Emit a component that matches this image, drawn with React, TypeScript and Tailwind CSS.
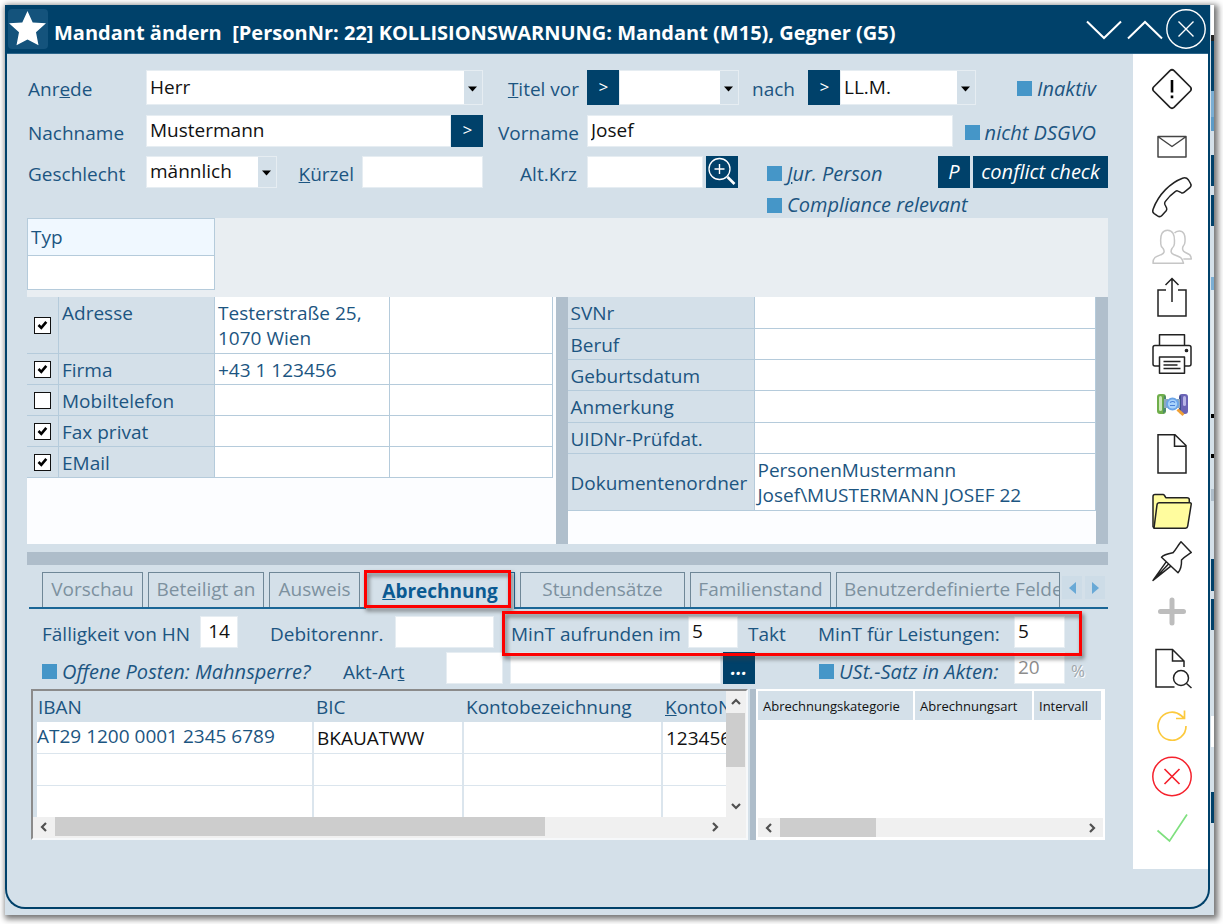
import React from 'react';

const labelBase = 'leading-6 text-[#1c5581] whitespace-nowrap';
const labelText = `text-[19px] ${labelBase}`;
const fieldBase = 'min-w-0 bg-white border border-[#e6edf2] px-[3px] pb-[2px] text-[19px] leading-6 outline-none rounded-none';
const field = `${fieldBase} text-[#111]`;
const darkButton = 'flex shrink-0 items-center justify-center bg-[#00416a] text-white';
const pickButton = `${darkButton} w-8 self-stretch pb-[2px] text-[17px] italic`;

function Label({ htmlFor, className = '', children }: { htmlFor: string; className?: string; children: React.ReactNode }) {
  return (
    <label htmlFor={htmlFor} className={`${labelText} shrink-0 pt-[3px] ${className}`}>
      {children}
    </label>
  );
}

function Combo({ id, value, className = '' }: { id: string; value: string; className?: string }) {
  return (
    <div className={`relative flex min-w-0 ${className}`}>
      <select id={id} defaultValue={value} className={`${field} h-full w-full appearance-none pr-5`}>
        <option value={value}>{value}</option>
      </select>
      <span className="pointer-events-none absolute top-px right-px bottom-px flex w-[18px] items-center justify-center bg-[#d4e0e9] pt-[2px] pr-[2px]">
        <svg width="9" height="6" viewBox="0 0 9 6"><path d="M0 0.5h9L4.5 5.5z" fill="#000" /></svg>
      </span>
    </div>
  );
}

function Tick({ id, className = '', children }: { id: string; className?: string; children: React.ReactNode }) {
  return (
    <label htmlFor={id} className={`flex shrink-0 items-center gap-[5px] text-[20px] italic ${labelBase} ${className}`}>
      <input id={id} type="checkbox" className="size-[15px] shrink-0 appearance-none bg-[#4596c8] checked:bg-[#00416a]" />
      <span>{children}</span>
    </label>
  );
}

function BoxTick({ on, name }: { on: boolean; name: string }) {
  return (
    <span className="ml-[7px] grid size-[17px]">
      <input type="checkbox" aria-label={name} defaultChecked={on} className="peer col-start-1 row-start-1 size-[17px] appearance-none border border-[#111] bg-white" />
      <svg viewBox="0 0 17 17" className="pointer-events-none col-start-1 row-start-1 size-[17px] opacity-0 peer-checked:opacity-100" fill="none" stroke="#000" strokeWidth="2.6">
        <path d="M4.5 8l2.8 2.8 5-6" />
      </svg>
    </span>
  );
}

const contacts = [
  { name: 'Adresse', value: 'Testerstraße 25, 1070 Wien', on: true },
  { name: 'Firma', value: '+43 1 123456', on: true },
  { name: 'Mobiltelefon', value: '', on: false },
  { name: 'Fax privat', value: '', on: true },
  { name: 'EMail', value: '', on: true },
];

const details = [
  ['SVNr', ''],
  ['Beruf', ''],
  ['Geburtsdatum', ''],
  ['Anmerkung', ''],
  ['UIDNr-Prüfdat.', ''],
  ['Dokumentenordner', 'PersonenMustermann Josef\\MUSTERMANN JOSEF 22'],
];

const backdrop: [number, string][] = [
  [30, '#ffffff'], [6, '#222222'], [50, '#00416a'], [27, '#7aaed4'], [14, '#5b9bc8'], [24, '#d4e0e9'],
  [31, '#00416a'], [9, '#d4e0e9'], [31, '#00416a'], [51, '#d4e0e9'], [14, '#7aaed4'], [124, '#dfe8ee'],
  [4, '#000000'], [36, '#d4e0e9'], [4, '#000000'], [32, '#d4e0e9'], [12, '#aebdca'], [58, '#d4e0e9'], [32, '#00416a'],
  [8, '#d4e0e9'], [31, '#00416a'], [87, '#d4e0e9'], [31, '#ffffff'], [45, '#d4e0e9'], [31, '#00416a'], [93, '#d4e0e9'],
];

function ToolButton({ name, children }: { name: string; children: React.ReactNode }) {
  return (
    <button type="button" aria-label={name} className="block size-10">
      <svg viewBox="0 0 40 40" className="size-10 overflow-visible" fill="none" stroke="#222" strokeWidth="1.5" strokeLinejoin="round">
        {children}
      </svg>
    </button>
  );
}

function Toolbar() {
  return (
    <aside className="flex w-[75px] shrink-0 flex-col items-center gap-[18px] self-start bg-white pt-[15px] pb-5 pl-[2px]">
      <ToolButton name="Warnung">
        <path d="M18 1.6q2-1.7 4 0L38.4 18q1.7 2 0 4L22 38.4q-2 1.7-4 0L1.6 22q-1.7-2 0-4z" strokeWidth="1.7" />
        <path d="M20 11v12.5M20 26.500v2.800" strokeWidth="2.6" stroke="#000" />
      </ToolButton>
      <div className="flex flex-col gap-[10px]">
        <ToolButton name="E-Mail">
          <path d="M6 9.500h28v20.500H6zM6.500 10L20 19.500 33.500 10" stroke="#444" />
        </ToolButton>
        <ToolButton name="Telefon">
          <path d="M30.500 1.200C19 5.500 6.500 17 1 32.500c-.6 1.800-.2 3.200 1.200 4.200l3.300 2.200c1.600 1 3.200.9 4.400-.5l4.300-4.700c.7-1 .8-1.700.4-2.700l-1.800-3.800c-.4-1-.2-1.700.4-2.600 3-4.200 6.300-7.500 10.300-10.300.9-.6 1.700-.7 2.600-.2l3.200 1.600c1 .4 1.800.3 2.700-.4l5.800-4.600c1.500-1.300 1.700-2.500.8-4L36.500 3C35 1 33 .4 30.500 1.200z" />
        </ToolButton>
        <ToolButton name="Personen">
          <g stroke="#c6c6c6">
            <path d="M1 36.200c0-6 3-6.700 8.500-8.700 3-1.200 3.200-3.500 1.600-6-1.700-1.500-2.600-3.800-2.300-5.700C8 7.500 10.500 3.300 15.500 3.300s7.500 4.200 6.900 12.500c.2 2-.8 4.200-2.400 5.700-1.500 2.500-1.200 4.800 1.700 6 5.500 2 8.800 2.700 9.800 8.700z" />
            <path d="M22.500 6.200c1-1.500 2.800-2.200 4.700-2.200 4.300 0 6.300 3.400 5.800 10 .1 2-.6 3.800-1.800 5.200-1.200 2.300-.6 5 1.800 6.100 4 1.800 6 2.300 6.300 6.700h-8" />
          </g>
        </ToolButton>
        <ToolButton name="Teilen">
          <path d="M14 13H6v26h28V13h-8M20 25V1.500M13.500 8L20 1.500 26.500 8" strokeLinejoin="miter" />
        </ToolButton>
      </div>
      <div className="flex flex-col gap-[10px]">
        <ToolButton name="Drucken">
          <path d="M7.500 10.500V-0.300h25v10.800M7.500 31H3q-2 0-2-2V12.500q0-2 2-2h34q2 0 2 2V29q0 2-2 2h-4.500M7.500 22h25v16.200h-25zM11.500 26.500h17M11.500 30h14M11.500 33.500h17" />
          <circle cx="34.500" cy="15.500" r="1.100" fill="#222" />
        </ToolButton>
        <ToolButton name="Suchen">
          <g stroke="none">
            <rect x="5" y="9" width="9" height="20" rx="3" fill="#6fae4b" />
            <rect x="7" y="11" width="3" height="15" rx="1.500" fill="#cfe9bb" />
            <path d="M12 10l2 2v14l-3 3z" fill="#4c8a6a" />
            <rect x="27" y="9" width="9" height="20" rx="3" fill="#6a63b5" />
            <rect x="31" y="11" width="3" height="10" rx="1.500" fill="#b9b5e6" />
            <path d="M27 12l2-2v18l-2-3z" fill="#40508c" />
            <path d="M12 14h4v9h-4zM25 14h3v9h-3z" fill="#8fa7bd" />
            <circle cx="20.500" cy="19" r="6.500" fill="#6ba4e6" />
            <circle cx="20.500" cy="19" r="4.600" fill="#a9d3fa" />
            <path d="M18 17.500q3-2 5 0M18 20.500h5" stroke="#4a80d8" strokeWidth="1.200" />
          </g>
          <path d="M25.500 24.500l6 5.500" stroke="#f2a134" strokeWidth="3" />
        </ToolButton>
        <ToolButton name="Neues Dokument">
          <path d="M6-0.300h17L34 10.500V38H6zM22.500-0.300v11.500H34" strokeLinejoin="miter" />
        </ToolButton>
      </div>
      <div className="flex flex-col gap-[10px]">
        <ToolButton name="Ordner">
          <path d="M2 35.200L1 33.500V3.500q0-2 2-2h8q1 0 1.500 1l1.300 2.200H35q2.300 0 2.300 2v3.500" fill="#fffc9e" />
          <path d="M2 35.200L5 11.800q.3-2 2.300-2H38q1.500 0 1.200 1.600l-3.500 21.800q-.3 2-2.200 2z" fill="#fffc9e" />
        </ToolButton>
        <ToolButton name="Anheften">
          <path d="M29 -1.200L39.300 9.400C37 11.400 33.500 12.600 29.500 17.100c.2 5-.8 9.500-3.500 12.700L9.500 14.300c2.300-2.700 6.500-3.500 11.500-4.500 3-3.500 5-7.500 8-11zM14.500 18.400L1 37.400 18.500 23.400M1.500 37.100L17 20.600" />
        </ToolButton>
        <ToolButton name="Hinzufügen">
          <path d="M20 7v23M8.500 18.500h23" stroke="#bdbdbd" strokeWidth="5" strokeLinecap="round" />
        </ToolButton>
      </div>
      <ToolButton name="Vorschau öffnen">
        <path d="M22.500 36H4V-1.500h16.500L32 10v6M20.500-1.500V10H32" strokeLinejoin="miter" />
        <circle cx="29" cy="27" r="7.500" />
        <path d="M34.500 32.500l5 4.500" />
      </ToolButton>
      <div className="flex flex-col gap-[10px]">
        <ToolButton name="Aktualisieren">
          <path d="M34 17a14 14 0 1 1-5-10.500l3.500 3M32.500 1.500v8H24" stroke="#fcc93c" strokeWidth="1.700" strokeLinejoin="miter" />
        </ToolButton>
        <ToolButton name="Abbrechen">
          <circle cx="20" cy="17.500" r="19.200" stroke="#f5222d" />
          <path d="M12.500 10l15 15M27.500 10l-15 15" stroke="#f5222d" strokeWidth="1.700" />
        </ToolButton>
        <ToolButton name="Speichern">
          <path d="M5.500 21.500L17.500 32 35 5.500" stroke="#7fe07f" strokeWidth="1.700" strokeLinejoin="miter" />
        </ToolButton>
      </div>
    </aside>
  );
}

function MasterData() {
  return (
    <form className="flex flex-col">
      <div className="flex h-[35px] items-stretch">
        <div className="flex flex-1 items-center">
          <Label htmlFor="anrede" className="w-[119px] pl-px">Anr<u>e</u>de</Label>
          <Combo id="anrede" value="Herr" className="flex-1 self-stretch" />
        </div>
        <div className="flex w-[625px] items-center">
          <Label htmlFor="titelvor" className="w-[104px] pr-2 text-right"><u>T</u>itel vor</Label>
          <button type="button" aria-label="Titel vor wählen" className={pickButton}>&gt;</button>
          <Combo id="titelvor" value="" className="w-[120px] self-stretch" />
          <Label htmlFor="titelnach" className="w-[69px] text-center">nach</Label>
          <button type="button" aria-label="Titel nach wählen" className={pickButton}>&gt;</button>
          <Combo id="titelnach" value="LL.M." className="w-[136px] self-stretch" />
          <Tick id="inaktiv" className="ml-auto pt-[2px] pr-3">Inaktiv</Tick>
        </div>
      </div>
      <div className="mt-[10px] flex h-8 items-stretch">
        <div className="flex flex-1 items-center">
          <Label htmlFor="nachname" className="w-[119px] pl-px">Nachname</Label>
          <input id="nachname" defaultValue="Mustermann" className={`${field} flex-1 self-stretch`} />
          <button type="button" aria-label="Nachname wählen" className={pickButton}>&gt;</button>
        </div>
        <div className="flex w-[625px] items-center">
          <Label htmlFor="vorname" className="w-[104px] pr-2 text-right">Vorname</Label>
          <input id="vorname" defaultValue="Josef" className={`${field} w-[366px] self-stretch`} />
          <Tick id="dsgvo" className="ml-auto pt-[3px] pr-3">nicht DSGVO</Tick>
        </div>
      </div>
      <div className="mt-[9px] flex h-8 items-stretch">
        <div className="flex flex-1 items-center">
          <Label htmlFor="geschlecht" className="w-[119px] pl-px">Geschlecht</Label>
          <Combo id="geschlecht" value="männlich" className="w-[131px] self-stretch" />
          <Label htmlFor="kuerzel" className="ml-auto pr-2"><u>K</u>ürzel</Label>
          <input id="kuerzel" className={`${field} w-[121px] self-stretch`} />
        </div>
        <div className="flex w-[625px] items-center">
          <Label htmlFor="altkrz" className="w-[104px] pr-[10px] text-right">Alt.Krz</Label>
          <input id="altkrz" className={`${field} w-[116px] self-stretch`} />
          <button type="button" aria-label="Kürzel suchen" className={`${darkButton} ml-[3px] w-8 self-stretch`}>
            <svg width="32" height="32" viewBox="0 0 32 32" fill="none" stroke="#fff">
              <circle cx="13.500" cy="13" r="10.500" strokeWidth="1.300" />
              <path d="M13.500 8v10M8.500 13h10" strokeWidth="1.400" />
              <path d="M21.500 21L28.500 28" strokeWidth="2.600" />
            </svg>
          </button>
          <Tick id="jur" className="ml-[29px] pt-[3px]"><u>J</u>ur. Person</Tick>
          <button type="button" className={`${darkButton} ml-auto w-8 self-stretch text-[20px] leading-6 italic`}>P</button>
          <button type="button" className={`${darkButton} ml-[3px] w-[135px] self-stretch text-[20px] leading-6 whitespace-nowrap italic`}>conflict check</button>
        </div>
      </div>
      <div className="mt-[5px] flex h-[25px] justify-end">
        <div className="w-[625px] pl-[284px]">
          <Tick id="compliance">Compliance relevant</Tick>
        </div>
      </div>
    </form>
  );
}

function Overview() {
  const cell = 'border-r border-b border-[#b5cbdb] p-0';
  return (
    <>
      <div className="h-[79px] bg-[#e9eef2]">
        <table className="w-[188px] border-collapse text-left">
          <thead>
            <tr><th scope="col" className={`${labelText} h-[37px] border border-[#b5cbdb] bg-[#f0f8ff] px-[3px] font-normal`}>Typ</th></tr>
          </thead>
          <tbody>
            <tr><td className="h-[34px] border border-[#b5cbdb] bg-white" /></tr>
          </tbody>
        </table>
      </div>
      <div className="grid h-[247px] grid-cols-[minmax(0,1fr)_12px_minmax(0,1fr)_12px] bg-[#fcfdff]">
        <div className="pr-[3px]">
          <table className="w-full table-fixed border-separate border-spacing-0">
            <colgroup>
              <col className="w-[32px]" /><col className="w-[156px]" /><col className="w-[175px]" /><col />
            </colgroup>
            <tbody>
              {contacts.map((c, i) => (
                <tr key={c.name} className={i === 0 ? 'h-[57px]' : 'h-[31px]'}>
                  <td className={`${cell} bg-[#d4e0e9]`}><BoxTick on={c.on} name={c.name} /></td>
                  <th scope="row" className={`${cell} ${labelText} bg-[#d4e0e9] px-[3px] pt-1 text-left align-top font-normal`}>{c.name}</th>
                  <td className={`${cell} bg-white px-[3px] pt-1 align-top text-[19px] leading-[25px] text-[#1c5581]`}>{c.value}</td>
                  <td className={`${cell} bg-white`} />
                </tr>
              ))}
            </tbody>
          </table>
        </div>
        <div className="bg-[#b0bfcc]" />
        <div>
          <table className="w-full table-fixed border-separate border-spacing-0">
            <colgroup><col className="w-[187px]" /><col /></colgroup>
            <tbody>
              {details.map(([name, value], i) => (
                <tr key={name} className={value ? 'h-[57px]' : i % 3 === 0 ? 'h-8' : 'h-[31px]'}>
                  <th scope="row" className={`${cell} ${labelText} bg-[#d4e0e9] px-[3px] pt-px text-left font-normal`}>{name}</th>
                  <td className={`${cell} bg-white px-[3px] pt-[2px] text-[19px] leading-[25px] text-[#1c5581]`}>
                    <span className="block max-w-[300px]">{value}</span>
                  </td>
                </tr>
              ))}
            </tbody>
          </table>
        </div>
        <div className="bg-[#b0bfcc]" />
      </div>
      <div className="mt-2 h-[13px] bg-[#aebdca]" />
    </>
  );
}

const tab = 'h-[35px] shrink-0 border border-b-0 border-[#6f8797] pb-[2px] text-[19px] leading-6 text-[#7d919f] whitespace-nowrap';
const redFrame = 'pointer-events-none absolute border-[3px] border-[#fd0000] drop-shadow-[2px_3px_2px_rgba(60,60,60,0.7)]';

function Tabs() {
  return (
    <div role="tablist" className="mt-[7px] ml-[2px] flex items-start">
      <div className="flex min-w-0 flex-1 items-start">
        <div className="flex gap-[5px] border-b-2 border-[#1a6696] pr-[5px] pl-[13px]">
          <button type="button" role="tab" className={`${tab} w-[101px]`}>Vorschau</button>
          <button type="button" role="tab" className={`${tab} w-[116px]`}>Beteiligt an</button>
          <button type="button" role="tab" className={`${tab} w-[91px]`}>Ausweis</button>
        </div>
        <div className="relative">
          <button type="button" role="tab" aria-selected="true" className="h-[37px] w-[150px] border border-b-0 border-[#1a6696] pb-px text-[19px] leading-6 font-bold text-[#0b5a92]">
            <u>A</u>brechnung
          </button>
          <span className={`${redFrame} -top-[2px] -left-px h-[38px] w-[147px]`} />
        </div>
        <div className="flex min-w-0 flex-1 gap-[5px] overflow-hidden border-b-2 border-[#1a6696] pl-[5px]">
          <button type="button" role="tab" className={`${tab} w-[165px]`}>St<u>u</u>ndensätze</button>
          <button type="button" role="tab" className={`${tab} w-[141px]`}>Familienstand</button>
          <div className="min-w-0 flex-1 overflow-hidden border-r border-[#6f8797]">
            <button type="button" role="tab" className={`${tab} w-[240px] pl-[7px] text-left`}>Benutzerdefinierte Felder</button>
          </div>
        </div>
      </div>
      <div className="flex h-[37px] gap-[3px] border-b-2 border-[#1a6696] pt-1 pr-[3px] pl-[2px]">
        <button type="button" aria-label="Zurück" className="flex h-[23px] w-5 items-center justify-center bg-[#cddce7]">
          <svg width="7" height="12" viewBox="0 0 7 12"><path d="M7 0v12L0 6z" fill="#69a9d6" /></svg>
        </button>
        <button type="button" aria-label="Weiter" className="flex h-[23px] w-5 items-center justify-center bg-[#cddce7]">
          <svg width="7" height="12" viewBox="0 0 7 12"><path d="M0 0v12l7-6z" fill="#69a9d6" /></svg>
        </button>
      </div>
    </div>
  );
}

function BillingForm() {
  return (
    <form className="flex flex-col gap-1 pt-[7px] pl-[15px]">
      <div className="flex h-8 items-center">
        <Label htmlFor="faellig" className="w-[158px]">Fälligkeit von HN</Label>
        <input id="faellig" defaultValue="14" className={`${field} w-[38px] self-stretch text-center`} />
        <Label htmlFor="debitor" className="w-[157px] pl-8">Debitorennr.</Label>
        <input id="debitor" className={`${field} w-0 flex-1 self-stretch`} />
        <div className="relative mr-[26px] ml-2 flex shrink-0 items-center self-stretch pr-[17px]">
          <Label htmlFor="takt" className="w-[186px] pl-[9px]">MinT aufrunden im</Label>
          <input id="takt" defaultValue="5" className={`${field} w-[50px] self-stretch`} />
          <span className={`${labelText} w-20 pt-[3px] pl-[10px]`}>Takt</span>
          <Label htmlFor="leistung" className="w-[196px]">MinT für Leistungen:</Label>
          <input id="leistung" defaultValue="5" className={`${field} w-[51px] self-stretch`} />
          <span className={`${redFrame} inset-x-0 -top-[5px] -bottom-2`} />
        </div>
      </div>
      <div className="flex h-8 items-center">
        <Tick id="mahn" className="w-[301px] pt-[7px]">Offene Posten: Mahnsperre?</Tick>
        <Label htmlFor="aktart" className="w-[103px] pt-[7px]">Akt-Ar<u>t</u></Label>
        <input id="aktart" className={`${field} w-[57px] self-stretch`} />
        <input aria-label="Akt-Art Bezeichnung" className={`${field} ml-[7px] w-0 flex-1 self-stretch`} />
        <button type="button" aria-label="Akt-Art wählen" className={`${darkButton} ml-[2px] w-8 self-stretch text-[19px] leading-6 font-bold italic`}>...</button>
        <Tick id="ust" className="ml-16 w-[195px] pt-[7px]">USt.-Satz in Akten:</Tick>
        <input aria-label="USt.-Satz" defaultValue="20" disabled className={`${fieldBase} w-[51px] self-stretch text-[#8d8d8d]`} />
        <span className="w-[43px] pt-[6px] pl-[6px] text-[17px] leading-6 text-[#9fa6ab] [text-shadow:1px_1px_0_#fff]">%</span>
      </div>
    </form>
  );
}

function Arrow({ d, name, className }: { d: string; name: string; className: string }) {
  return (
    <button type="button" aria-label={name} className={`flex shrink-0 items-center justify-center ${className}`}>
      <svg width="10" height="10" viewBox="0 0 10 10" fill="none" stroke="#505050" strokeWidth="2.200"><path d={d} /></svg>
    </button>
  );
}

const LEFT = 'M7 1L3 5l4 4';
const RIGHT = 'M3 1l4 4-4 4';
const UP = 'M1 7l4-4 4 4';
const DOWN = 'M1 3l4 4 4-4';

function Accounts() {
  const td = 'border-r-2 border-b border-[#dbe5ed] bg-white px-[3px] text-[19px] leading-6 whitespace-nowrap';
  const th = `${labelText} h-[31px] text-left font-normal`;
  return (
    <div className="mt-[5px] flex h-[151px] pr-[3px] pl-1">
      <div className="flex min-w-0 flex-1 flex-col border-2 border-t-[#8b8b8b] border-r-[#f6f8fa] border-b-[#f6f8fa] border-l-[#8b8b8b]">
        <div className="flex min-h-0 flex-1">
          <div className="min-w-0 flex-1 overflow-hidden pl-1">
            <table className="w-[737px] table-fixed border-separate border-spacing-0">
              <colgroup><col className="w-[277px]" /><col className="w-[150px]" /><col className="w-[199px]" /><col /></colgroup>
              <thead>
                <tr>
                  <th scope="col" className={`${th} pl-px`}>IBAN</th>
                  <th scope="col" className={`${th} pl-[2px]`}>BIC</th>
                  <th scope="col" className={`${th} pl-[2px]`}>Kontobezeichnung</th>
                  <th scope="col" className={`${th} pl-[2px]`}><u>K</u>ontoNr</th>
                </tr>
              </thead>
              <tbody>
                <tr className="h-8">
                  <td className={`${td} pb-1 pl-0 text-[#1c5581]`}>AT29 1200 0001 2345 6789</td>
                  <td className={`${td} text-[#111]`}>BKAUATWW</td>
                  <td className={td} />
                  <td className={`${td} text-[#111]`}>1234567</td>
                </tr>
                <tr className="h-8"><td className={td} /><td className={td} /><td className={td} /><td className={td} /></tr>
                <tr className="h-8"><td className={td} /><td className={td} /><td className={td} /><td className={td} /></tr>
              </tbody>
            </table>
          </div>
          <div className="flex w-5 flex-col bg-[#f0f0f0] pr-px">
            <Arrow d={UP} name="Nach oben" className="h-[22px]" />
            <div className="h-[54px] bg-[#cdcdcd]" />
            <Arrow d={DOWN} name="Nach unten" className="mt-auto h-[22px]" />
          </div>
        </div>
        <div className="flex h-[21px] bg-[#f0f0f0] pb-[2px]">
          <Arrow d={LEFT} name="Nach links" className="w-[22px]" />
          <div className="w-[490px] bg-[#cdcdcd]" />
          <Arrow d={RIGHT} name="Nach rechts" className="mr-5 ml-auto w-[22px]" />
        </div>
      </div>
      <div className="ml-[2px] w-[6px] bg-[#aebdca]" />
      <div className="flex w-[349px] shrink-0 flex-col border-2 border-white bg-white">
        <table className="w-full table-fixed border-separate border-spacing-0">
          <colgroup><col className="w-[157px]" /><col className="w-[119px]" /><col /></colgroup>
          <thead>
            <tr>
              {['Abrechnungskategorie', 'Abrechnungsart', 'Intervall'].map((h) => (
                <th key={h} scope="col" className="h-[29px] border-r-2 border-white bg-[#d4e0e9] pl-[5px] text-left text-[13px] leading-5 font-normal whitespace-nowrap text-[#111]">{h}</th>
              ))}
            </tr>
          </thead>
        </table>
        <div className="mt-auto mb-px flex h-[19px] bg-[#f0f0f0]">
          <Arrow d={LEFT} name="Nach links" className="w-[22px]" />
          <div className="w-24 bg-[#cdcdcd]" />
          <Arrow d={RIGHT} name="Nach rechts" className="ml-auto w-[22px]" />
        </div>
      </div>
    </div>
  );
}

export default function App() {
  return (
    <div className="min-h-screen bg-white pt-[5px] pr-[9px] pb-[9px] pl-[5px] font-['Open_Sans','Noto_Sans',sans-serif]">
      <div className="flex bg-[#d4e0e9] shadow-[2px_2px_6px_2px_rgba(0,0,0,0.55)]">
        <div className="mb-[6px] flex min-w-0 flex-1 flex-col overflow-hidden rounded-b-[20px] border-2 border-t-0 border-[#00416a]">
          <header className="flex h-[49px] items-start border-b border-[#2c668b] bg-[#00416a] pt-1 pr-[2px] pl-px">
            <span className="flex size-10 items-center justify-center rounded bg-[#14537c]">
              <svg viewBox="0 0 40 40" className="size-10"><path d="M19.500 2l5.200 11.500 13.300.8-10 9 2.500 13L19.500 30.500 8.500 36.300l2.500-13-10-9 13.300-.8z" fill="#fff" /></svg>
            </span>
            <h1 className="flex-1 pt-3 pl-[6px] text-[20px] leading-6 font-bold whitespace-pre text-white">{'Mandant ändern  [PersonNr: 22] KOLLISIONSWARNUNG: Mandant (M15), Gegner (G5)'}</h1>
            <button type="button" aria-label="Nächster"><svg width="41" height="40" viewBox="0 0 41 40" fill="none" stroke="#fff" strokeWidth="2"><path d="M3 12.500l17 16.500 17-16.500" /></svg></button>
            <button type="button" aria-label="Vorheriger"><svg width="41" height="40" viewBox="0 0 41 40" fill="none" stroke="#fff" strokeWidth="2"><path d="M3 29.500l17-16.500 17 16.500" /></svg></button>
            <button type="button" aria-label="Schließen"><svg width="40" height="40" viewBox="0 0 40 40" fill="none" stroke="#fff" strokeWidth="1.400"><circle cx="20" cy="20" r="19.200" /><path d="M12.500 12.500l15 15M27.500 12.500l-15 15" /></svg></button>
          </header>
          <div className="flex">
            <main className="min-w-0 flex-1 pt-4 pr-[25px] pb-[67px] pl-5">
              <MasterData />
              <Overview />
              <Tabs />
              <BillingForm />
              <Accounts />
            </main>
            <Toolbar />
          </div>
        </div>
        <div className="ml-px flex w-[3px] flex-col" aria-hidden="true">
          {backdrop.map(([size, color], i) => (
            <span key={i} style={{ flexGrow: size, backgroundColor: color }} />
          ))}
        </div>
      </div>
    </div>
  );
}
